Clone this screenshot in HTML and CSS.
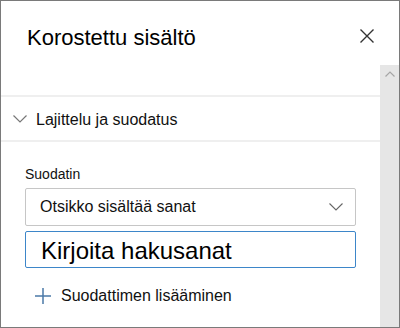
FILE: index.html
```html
<!DOCTYPE html>
<html lang="fi">
<head>
  <meta charset="UTF-8" />
  <title>Korostettu sisältö</title>
  <meta name="viewport" content="width=device-width, initial-scale=1.0" />
  <link rel="stylesheet" href="styles.css">
</head>
<body>
  <div class="panel" aria-label="Korostettu sisältö">
    <div class="panel-header">
      <h1>Korostettu sisältö</h1>
      <button class="close" aria-label="Sulje">
        <svg width="14" height="14" viewBox="0 0 14 14"><path d="M0.5 0.5 L13.5 13.5 M13.5 0.5 L0.5 13.5" stroke="#333" stroke-width="1.4" fill="none"/></svg>
      </button>
    </div>

    <div class="panel-body">
      <div class="content">
        <div class="section-head">
          <svg class="chev" width="14" height="8" viewBox="0 0 14 8"><path d="M0.5 0.5 L7 7 L13.5 0.5" stroke="#777" stroke-width="1.2" fill="none"/></svg>
          <span>Lajittelu ja suodatus</span>
        </div>

        <div class="filters">
          <label for="filterType">Suodatin</label>
          <div class="dropdown" id="filterType" role="button">
            <span>Otsikko sisältää sanat</span>
            <svg width="14" height="8" viewBox="0 0 14 8"><path d="M0.5 0.5 L7 7 L13.5 0.5" stroke="#666" stroke-width="1.1" fill="none"/></svg>
          </div>
          <div class="search-box">Kirjoita hakusanat</div>

          <div class="add-filter">
            <svg width="16" height="16" viewBox="0 0 16 16"><path d="M8 0 V16 M0 8 H16" stroke="#4b79a8" stroke-width="1.5" fill="none"/></svg>
            <span>Suodattimen lisääminen</span>
          </div>
        </div>
      </div>

      <div class="scrollbar">
        <svg width="10" height="6" viewBox="0 0 10 6"><path d="M0.5 5.5 L5 1 L9.5 5.5" stroke="#a6a6a6" stroke-width="1.2" fill="none"/></svg>
      </div>
    </div>
  </div>
</body>
</html>
```

FILE: styles.css
```css
body {
  margin: 0;
  font-family: "Liberation Sans", Arial, sans-serif;
  color: #111;
  background: #fff;
}

.panel {
  width: 400px;
  height: 328px;
  box-sizing: border-box;
  border: 1px solid #7a7a7a;
  display: flex;
  flex-direction: column;
  overflow: hidden;
}

/* Header */
.panel-header {
  height: 64px;
  flex-shrink: 0;
  display: flex;
  justify-content: space-between;
  align-items: flex-start;
  padding: 0 25px 0 26px;
}

.panel-header h1 {
  margin: 23px 0 0;
  font-size: 22px;
  line-height: 28px;
  font-weight: normal;
  color: #000;
}

.close {
  margin-top: 28px;
  padding: 0;
  border: none;
  background: none;
  width: 14px;
  height: 14px;
  display: block;
}
.close svg {
  display: block;
}

/* Body with scrollbar */
.panel-body {
  flex: 1;
  display: flex;
  min-height: 0;
}

.content {
  flex: 1;
  padding-top: 30px;
}

.scrollbar {
  width: 19px;
  flex-shrink: 0;
  background: #e6e6e6;
  display: flex;
  justify-content: center;
  padding-top: 6px;
  box-sizing: border-box;
}
.scrollbar svg {
  display: block;
}

.section-head {
  display: flex;
  align-items: center;
  gap: 9px;
  padding: 13px 0 10px 12px;
  border-top: 2px solid #efefef;
  border-bottom: 2px solid #efefef;
  font-size: 16px;
  line-height: 20px;
}
.chev {
  display: block;
  margin-top: -2px;
}

/* Filter form */
.filters {
  padding: 23px 24px 0;
  display: flex;
  flex-direction: column;
}

label {
  font-size: 14px;
  line-height: 18px;
  margin-bottom: 5px;
}

.dropdown {
  height: 38px;
  box-sizing: border-box;
  border: 1px solid #c6c6c6;
  border-radius: 2px;
  display: flex;
  align-items: center;
  justify-content: space-between;
  padding: 0 12px 0 14px;
  font-size: 16px;
}
.dropdown svg {
  display: block;
}

.search-box {
  margin-top: 5px;
  height: 37px;
  box-sizing: border-box;
  border: 1px solid #3d86c9;
  border-radius: 2px;
  display: flex;
  align-items: center;
  padding: 2px 0 0 15px;
  font-size: 24px;
  color: #000;
}

.add-filter {
  margin-top: 18px;
  display: flex;
  align-items: center;
  gap: 10px;
  padding-left: 10px;
  font-size: 16px;
  line-height: 20px;
}
.add-filter svg {
  display: block;
}
```
